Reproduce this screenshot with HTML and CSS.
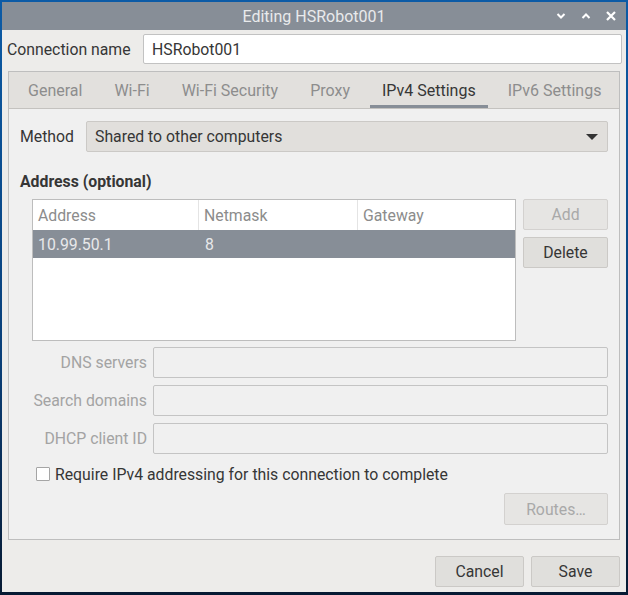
FILE: index.html
```html
<!DOCTYPE html>
<html>
<head>
<meta charset="utf-8">
<link rel="stylesheet" href="styles.css">
</head>
<body>
<div class="window">
  <div class="titlebar">
    <span class="title">Editing HSRobot001</span>
    <div class="controls">
      <svg width="10" height="10" viewBox="0 0 10 10"><path d="M1.5 3 L5 6.5 L8.5 3" fill="none" stroke="#fff" stroke-width="2"/></svg>
      <svg width="10" height="10" viewBox="0 0 10 10"><path d="M1.5 7 L5 3.5 L8.5 7" fill="none" stroke="#fff" stroke-width="2"/></svg>
      <svg width="10" height="10" viewBox="0 0 10 10"><path d="M1 1 L9 9 M9 1 L1 9" fill="none" stroke="#fff" stroke-width="2.2"/></svg>
    </div>
  </div>
  <div class="content">
    <div class="conn-row">
      <label class="conn-label">Connection name</label>
      <div class="entry">HSRobot001</div>
    </div>
    <div class="notebook">
      <div class="tabs">
        <div class="tab">General</div>
        <div class="tab">Wi-Fi</div>
        <div class="tab">Wi-Fi Security</div>
        <div class="tab">Proxy</div>
        <div class="tab active">IPv4 Settings</div>
        <div class="tab">IPv6 Settings</div>
      </div>
      <div class="page">
        <div class="method-row">
          <span class="label">Method</span>
          <div class="combo">
            <span>Shared to other computers</span>
            <svg width="14" height="8" viewBox="0 0 14 8"><path d="M1 1 L13 1 L7 7 Z" fill="#333"/></svg>
          </div>
        </div>
        <div class="section-title">Address (optional)</div>
        <div class="addr-area">
          <div class="table">
            <div class="thead">
              <div class="th">Address</div>
              <div class="th">Netmask</div>
              <div class="th last">Gateway</div>
            </div>
            <div class="trow selected">
              <div class="td">10.99.50.1</div>
              <div class="td">8</div>
              <div class="td"></div>
            </div>
          </div>
          <div class="side-buttons">
            <button class="btn disabled">Add</button>
            <button class="btn">Delete</button>
          </div>
        </div>
        <div class="form">
          <span class="flabel">DNS servers</span>
          <div class="dentry"></div>
          <span class="flabel">Search domains</span>
          <div class="dentry"></div>
          <span class="flabel">DHCP client ID</span>
          <div class="dentry"></div>
        </div>
        <div class="check-row">
          <span class="checkbox"></span>
          <span>Require IPv4 addressing for this connection to complete</span>
        </div>
        <div class="routes-row">
          <button class="btn disabled routes">Routes…</button>
        </div>
      </div>
    </div>
    <div class="actions">
      <button class="btn action">Cancel</button>
      <button class="btn action">Save</button>
    </div>
  </div>
</div>
</body>
</html>
```

FILE: styles.css
```css
html, body {
  margin: 0;
  padding: 0;
}
body {
  width: 628px;
  height: 595px;
  background: linear-gradient(180deg, #0c5ba6 0%, #0a3f78 60%, #071a33 100%);
  padding: 2px 2px 3px 2px;
  box-sizing: border-box;
  font-family: Roboto, "Liberation Sans", sans-serif;
  font-size: 15.8px;
  color: #363636;
  overflow: hidden;
}
.window {
  width: 624px;
  height: 590px;
  background: #edecea;
  display: flex;
  flex-direction: column;
}
.titlebar {
  height: 28px;
  background: #878e97;
  position: relative;
  display: flex;
  align-items: center;
  justify-content: center;
  flex: 0 0 auto;
}
.title {
  color: #e9eaec;
  font-size: 16px;
}
.controls {
  position: absolute;
  right: 10px;
  top: 9px;
  display: flex;
  gap: 15px;
}
.controls svg {
  display: block;
}
.content {
  flex: 1;
  display: flex;
  flex-direction: column;
}
.conn-row {
  display: flex;
  align-items: center;
  margin: 4px 4px 0 5px;
}
.conn-label {
  width: 136px;
  flex: 0 0 auto;
}
.entry {
  flex: 1;
  height: 30px;
  box-sizing: border-box;
  background: #fff;
  border: 1px solid #c2c2c2;
  border-radius: 2px;
  padding: 0 8px;
  display: flex;
  align-items: center;
}
.notebook {
  margin: 7px 6px 0 6px;
  border: 1px solid #bebebe;
  height: 469px;
  box-sizing: border-box;
  display: flex;
  flex-direction: column;
  background: #f0f0f0;
}
.tabs {
  height: 36px;
  background: #e2e0dd;
  border-bottom: 1px solid #c4c2bf;
  display: flex;
  padding-left: 7px;
  gap: 8px;
  box-sizing: content-box;
  font-size: 16px;
}
.tab {
  padding: 0 12px;
  display: flex;
  align-items: center;
  color: #8d8d8d;
  box-sizing: border-box;
  border-bottom: 3px solid transparent;
  padding-top: 3px;
}
.tab.active {
  color: #363636;
  border-bottom-color: #878e97;
}
.page {
  flex: 1;
  padding: 12px 11px 0 11px;
  display: flex;
  flex-direction: column;
}
.method-row {
  display: flex;
  align-items: center;
}
.method-row .label {
  width: 66px;
  flex: 0 0 auto;
}
.combo {
  flex: 1;
  height: 31px;
  box-sizing: border-box;
  background: #e1dfdc;
  border: 1px solid #cbc9c6;
  border-radius: 2px;
  display: flex;
  align-items: center;
  justify-content: space-between;
  padding: 0 8px 0 8px;
}
.combo svg {
  display: block;
}
.section-title {
  font-weight: bold;
  margin-top: 20px;
  height: 19px;
  line-height: 19px;
}
.addr-area {
  display: flex;
  margin-top: 8px;
  margin-left: 12px;
  gap: 7px;
}
.table {
  width: 484px;
  height: 142px;
  box-sizing: border-box;
  background: #fff;
  border: 1px solid #bdbdbd;
}
.thead {
  display: flex;
  height: 30px;
}
.th {
  color: #8c8c8c;
  padding-left: 5px;
  display: flex;
  align-items: center;
  border-right: 1px solid #e4e4e4;
  box-sizing: border-box;
}
.th:nth-child(1), .td:nth-child(1) { width: 166px; }
.th:nth-child(2), .td:nth-child(2) { width: 159px; }
.th.last, .td:nth-child(3) { flex: 1; border-right: none; }
.trow {
  display: flex;
  height: 28px;
}
.trow.selected {
  background: #878e97;
  color: #e7e8ea;
}
.td {
  padding-left: 5px;
  display: flex;
  align-items: center;
  box-sizing: border-box;
}
.td:nth-child(2) { padding-left: 6px; }
.side-buttons {
  display: flex;
  flex-direction: column;
  gap: 7px;
  flex: 1;
}
.btn {
  font-family: Roboto, "Liberation Sans", sans-serif;
  font-size: 15.8px;
  color: #363636;
  background: #e0dfdc;
  border: 1px solid #cbc9c6;
  border-radius: 2px;
  height: 31px;
  padding: 0;
  margin: 0;
}
.btn.disabled {
  color: #a9a9a9;
  background: #e6e5e3;
  border-color: #d3d1cf;
}
.form {
  display: grid;
  grid-template-columns: 115px 1fr;
  grid-auto-rows: 31px;
  column-gap: 6px;
  row-gap: 7px;
  margin-top: 6px;
  margin-left: 12px;
}
.flabel {
  color: #a3a3a3;
  text-align: right;
  display: flex;
  align-items: center;
  justify-content: flex-end;
}
.dentry {
  height: 31px;
  box-sizing: border-box;
  border: 1px solid #c4c4c4;
  border-radius: 2px;
  background: #f0f0f0;
}
.check-row {
  display: flex;
  align-items: center;
  margin-top: 10px;
  margin-left: 16px;
  gap: 5px;
  height: 20px;
}
.checkbox {
  width: 14px;
  height: 14px;
  box-sizing: border-box;
  border: 1px solid #a5a5a5;
  background: #fff;
  border-radius: 1px;
}
.routes-row {
  display: flex;
  justify-content: flex-end;
  margin-top: 9px;
}
.btn.routes {
  width: 104px;
  height: 32px;
}
.actions {
  display: flex;
  justify-content: flex-end;
  gap: 7px;
  margin: 16px 6px 0 0;
}
.btn.action {
  width: 89px;
  height: 31px;
}
```
